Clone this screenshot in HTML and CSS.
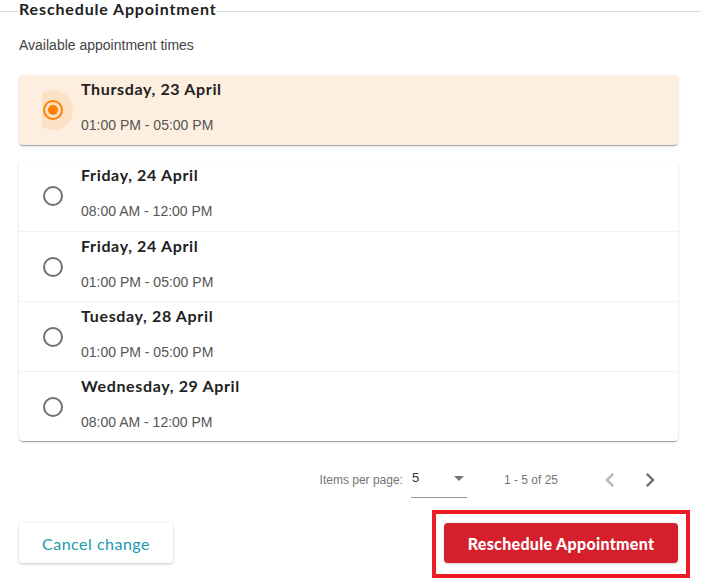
FILE: index.html
```html
<!DOCTYPE html>
<html lang="en">
<head>
<meta charset="utf-8">
<title>Reschedule Appointment</title>
<link rel="stylesheet" href="styles.css">
</head>
<body>
<div class="page">
  <div class="header">
    <span class="rule rule-start"></span>
    <h2 class="legend">Reschedule Appointment</h2>
    <span class="rule"></span>
  </div>
  <div class="content">
    <p class="intro">Available appointment times</p>

    <div class="card selected">
      <div class="row">
        <span class="radio checked"><span class="ripple"></span></span>
        <div class="slot">
          <div class="day">Thursday, 23 April</div>
          <div class="time">01:00 PM - 05:00 PM</div>
        </div>
      </div>
    </div>

    <div class="card list">
      <div class="row">
        <span class="radio"></span>
        <div class="slot">
          <div class="day">Friday, 24 April</div>
          <div class="time">08:00 AM - 12:00 PM</div>
        </div>
      </div>
      <div class="row">
        <span class="radio"></span>
        <div class="slot">
          <div class="day">Friday, 24 April</div>
          <div class="time">01:00 PM - 05:00 PM</div>
        </div>
      </div>
      <div class="row">
        <span class="radio"></span>
        <div class="slot">
          <div class="day">Tuesday, 28 April</div>
          <div class="time">01:00 PM - 05:00 PM</div>
        </div>
      </div>
      <div class="row">
        <span class="radio"></span>
        <div class="slot">
          <div class="day">Wednesday, 29 April</div>
          <div class="time">08:00 AM - 12:00 PM</div>
        </div>
      </div>
    </div>

    <div class="paginator">
      <span class="pg-label">Items per page:</span>
      <div class="pg-select">
        <span class="pg-value">5</span>
        <span class="pg-arrow"></span>
      </div>
      <span class="pg-range">1 - 5 of 25</span>
      <button class="pg-btn disabled" aria-label="Previous page">
        <svg viewBox="0 0 24 24" width="28" height="28"><path d="M15.41 7.41L14 6l-6 6 6 6 1.41-1.41L10.83 12z"/></svg>
      </button>
      <button class="pg-btn" aria-label="Next page">
        <svg viewBox="0 0 24 24" width="28" height="28"><path d="M10 6L8.59 7.41 13.17 12l-4.58 4.59L10 18l6-6z"/></svg>
      </button>
    </div>

    <div class="actions">
      <button class="btn btn-cancel">Cancel change</button>
      <button class="btn btn-primary">Reschedule Appointment</button>
    </div>
  </div>
  <div class="highlight"></div>
</div>
</body>
</html>
```

FILE: styles.css
```css
* { box-sizing: border-box; }

body {
  margin: 0;
  background: #ffffff;
  font-family: "Liberation Sans", Arial, sans-serif;
  color: #222;
}

.page {
  position: relative;
  width: 701px;
  height: 588px;
  overflow: hidden;
}

.header {
  display: flex;
  align-items: flex-start;
  height: 18px;
}

.rule {
  flex: 1;
  height: 1px;
  margin-top: 11px;
  background: #dedede;
}

.rule-start {
  flex: none;
  width: 19px;
}

.legend {
  margin: 0;
  font-family: Lato, "Noto Sans", sans-serif;
  font-weight: 700;
  font-size: 16px;
  line-height: 18px;
  letter-spacing: 0.85px;
  color: #222;
}

.content {
  padding: 0 23px 0 19px;
}

.intro {
  margin: 17px 0 0;
  font-size: 14px;
  line-height: 20px;
  color: #444;
}

.card {
  background: #fff;
  border-radius: 4px;
  box-shadow: 0 2px 1px -1px rgba(0,0,0,.2), 0 1px 1px 0 rgba(0,0,0,.14), 0 1px 3px 0 rgba(0,0,0,.12);
}

.card.selected {
  margin-top: 20px;
  background: #fdeedf;
}

.card.list {
  margin-top: 16px;
}

.row {
  display: flex;
  align-items: center;
  height: 70px;
  border-top: 1px solid #f1f1f1;
}

.row:first-child { border-top: 0; }

.radio {
  position: relative;
  flex: none;
  width: 20px;
  height: 20px;
  margin-left: 24px;
  margin-right: 18px;
  border: 2px solid #707070;
  border-radius: 50%;
}

.radio.checked {
  border-color: #ff7f00;
}

.radio.checked::after {
  content: "";
  position: absolute;
  left: 3px;
  top: 3px;
  width: 10px;
  height: 10px;
  border-radius: 50%;
  background: #ff7f00;
}

.ripple {
  position: absolute;
  left: -12px;
  top: -12px;
  width: 40px;
  height: 40px;
  border-radius: 50%;
  background: rgba(255, 140, 20, .13);
  clip-path: inset(0 0 0 9px);
}

.slot {
  align-self: flex-start;
  padding-top: 4px;
}

.day {
  font-family: Lato, "Noto Sans", sans-serif;
  font-weight: 700;
  font-size: 16px;
  line-height: 20px;
  letter-spacing: 0.65px;
  color: #222;
}

.time {
  margin-top: 16px;
  font-size: 14px;
  line-height: 20px;
  color: #555;
}

.paginator {
  display: flex;
  align-items: center;
  justify-content: flex-end;
  height: 56px;
  margin-top: 11px;
  padding-right: 8px;
  color: #757575;
  font-size: 12px;
}

.pg-label {
  margin-right: 8px;
}

.pg-select {
  position: relative;
  width: 56px;
  height: 30px;
  border-bottom: 1px solid #949494;
  margin-top: 6px;
}

.pg-value {
  position: absolute;
  left: 1px;
  top: 2px;
  font-size: 13px;
  color: #333;
}

.pg-arrow {
  position: absolute;
  right: 3px;
  top: 8px;
  width: 0;
  height: 0;
  border-left: 5px solid transparent;
  border-right: 5px solid transparent;
  border-top: 5px solid #757575;
}

.pg-range {
  margin: 0 32px 0 37px;
}

.pg-btn {
  display: flex;
  align-items: center;
  justify-content: center;
  width: 40px;
  height: 40px;
  padding: 0;
  border: 0;
  background: transparent;
  fill: #6f6f6f;
}

.pg-btn.disabled {
  fill: #b5b5b5;
}

.actions {
  display: flex;
  justify-content: space-between;
  margin-top: 15px;
}

.btn {
  height: 40px;
  border: 0;
  border-radius: 4px;
  font-family: Lato, "Noto Sans", sans-serif;
  font-size: 16px;
}

.btn-cancel {
  width: 154px;
  background: #fff;
  color: #1b9aae;
  letter-spacing: 0.5px;
  box-shadow: 0 1px 3px rgba(0,0,0,.22), 0 0 1px rgba(0,0,0,.08);
}

.btn-primary {
  width: 234px;
  background: #d51f2c;
  color: #fff;
  font-weight: 900;
  letter-spacing: 0.3px;
  box-shadow: 0 1px 3px rgba(0,0,0,.2);
}

.highlight {
  position: absolute;
  left: 432px;
  top: 510px;
  width: 258px;
  height: 68px;
  border: 4px solid #ee1c24;
  pointer-events: none;
}
```
